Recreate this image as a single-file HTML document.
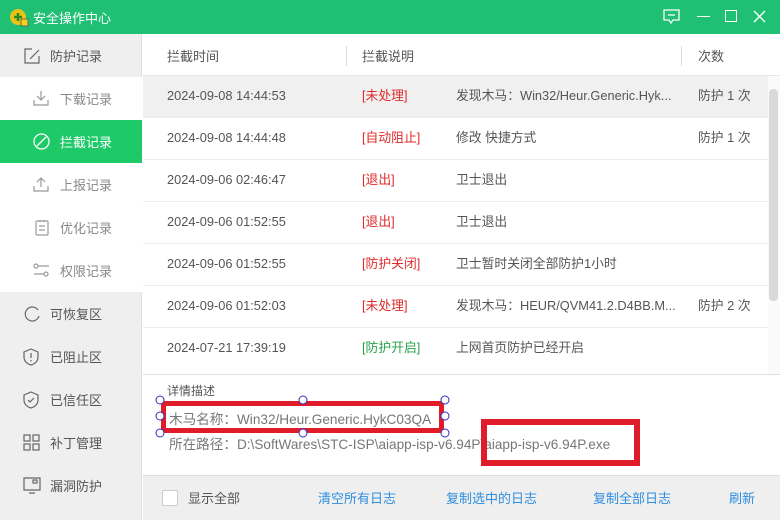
<!DOCTYPE html>
<html><head><meta charset="utf-8"><style>
*{margin:0;padding:0;box-sizing:border-box}
body{width:780px;height:520px;overflow:hidden;font-family:"Liberation Sans","Noto Sans CJK SC",sans-serif;font-size:13px;color:#555;background:#fff;position:relative}
.title{position:absolute;left:0;top:0;width:780px;height:34px;background:#1fbf74;color:#fff}
.title .t{position:absolute;left:33px;top:8px;font-size:13px}
.side{position:absolute;left:0;top:34px;width:142px;height:486px;background:#efefef;border-right:1px solid #e0e0e0}
.it{position:absolute;left:0;width:142px;height:43px;line-height:45px;font-size:13px;color:#555}
.it svg{position:absolute;top:13px}
.sub{background:#fff;color:#888}
.sub span{position:absolute;left:60px}
.main span.l{position:absolute;left:50px}
.act{background:#1ec968;color:#fff}
.row{position:absolute;left:143px;width:625px;height:42px;border-bottom:1px solid #ececec}
.row div{position:absolute;top:0;line-height:40px;white-space:nowrap;font-size:12.8px}
.c1{left:24px}.c2{left:219px}.c3{left:313px}.c4{left:555px}
.red{color:#e02a2a}.grn{color:#28a048}
.lnk{position:absolute;top:488px;color:#2e8ee0}
</style></head><body>
<div class="title">
<svg style="position:absolute;left:9px;top:7px" width="20" height="20"><circle cx="9" cy="10" r="8" fill="#e8c416"/><path d="M5 10h8M9 6v8" stroke="#2a8a2a" stroke-width="2.5"/><rect x="12" y="12" width="7" height="7" fill="#f5d020" stroke="#555" stroke-width=".8"/></svg>
<div class="t">安全操作中心</div>
<svg style="position:absolute;left:663px;top:9px" width="17" height="16" fill="none" stroke="#fff" stroke-width="1.3"><path d="M1 1h15v10H10l-2 3-2-3H1z"/><path d="M5 6h7"/></svg>
<div style="position:absolute;left:697px;top:16px;width:13px;height:1.3px;background:#fff"></div>
<div style="position:absolute;left:725px;top:10px;width:12px;height:12px;border:1.3px solid #fff"></div>
<svg style="position:absolute;left:753px;top:10px" width="13" height="13" stroke="#fff" stroke-width="1.4"><path d="M1 1l11 11M12 1L1 12"/></svg>
</div>
<div class="side">
<div class="it main" style="top:0"><svg style="left:23px" width="18" height="18" fill="none" stroke="#666" stroke-width="1.2"><path d="M9 2H2v14h14V9"/><path d="M7 12l9-9"/></svg><span class="l">防护记录</span></div>
<div class="it sub" style="top:43px"><svg style="left:33px" width="16" height="16" fill="none" stroke="#999" stroke-width="1.2"><path d="M8 1v9M4 6l4 4 4-4M1 10v5h14v-5"/></svg><span>下载记录</span></div>
<div class="it sub act" style="top:86px"><svg style="left:33px" width="17" height="17" fill="none" stroke="#fff" stroke-width="1.3"><circle cx="8.5" cy="8.5" r="7.5"/><path d="M4 13l9-9"/></svg><span>拦截记录</span></div>
<div class="it sub" style="top:129px"><svg style="left:33px" width="16" height="16" fill="none" stroke="#999" stroke-width="1.2"><path d="M8 11V2M4 6l4-4 4 4M1 10v5h14v-5"/></svg><span>上报记录</span></div>
<div class="it sub" style="top:172px"><svg style="left:35px" width="14" height="17" fill="none" stroke="#999" stroke-width="1.2"><rect x="1" y="2" width="12" height="14" rx="1"/><path d="M4 7h6M4 11h6M5 1v2M9 1v2"/></svg><span>优化记录</span></div>
<div class="it sub" style="top:215px"><svg style="left:33px" width="17" height="16" fill="none" stroke="#999" stroke-width="1.2"><circle cx="3" cy="4" r="2"/><path d="M5 4h11M1 12h10"/><circle cx="13" cy="12" r="2"/></svg><span>权限记录</span></div>
<div class="it main" style="top:258px"><svg style="left:23px" width="18" height="18" fill="none" stroke="#666" stroke-width="1.2"><path d="M15 5A7 7 0 1 0 16 11"/></svg><span class="l">可恢复区</span></div>
<div class="it main" style="top:301px"><svg style="left:23px" width="16" height="18" fill="none" stroke="#666" stroke-width="1.2"><path d="M8 1l7 3v5c0 4-3 7-7 8-4-1-7-4-7-8V4z"/><path d="M8 5v5M8 12v1.5"/></svg><span class="l">已阻止区</span></div>
<div class="it main" style="top:344px"><svg style="left:23px" width="16" height="18" fill="none" stroke="#666" stroke-width="1.2"><path d="M8 1l7 3v5c0 4-3 7-7 8-4-1-7-4-7-8V4z"/><path d="M5 9l2 2 4-4"/></svg><span class="l">已信任区</span></div>
<div class="it main" style="top:387px"><svg style="left:23px" width="17" height="17" fill="none" stroke="#666" stroke-width="1.2"><rect x="1" y="1" width="6" height="6"/><rect x="10" y="1" width="6" height="6"/><rect x="1" y="10" width="6" height="6"/><rect x="10" y="10" width="6" height="6"/></svg><span class="l">补丁管理</span></div>
<div class="it main" style="top:430px"><svg style="left:23px" width="18" height="18" fill="none" stroke="#666" stroke-width="1.2"><path d="M1 1h16v12H1zM6 16h6"/><rect x="10" y="3" width="4" height="3"/></svg><span class="l">漏洞防护</span></div>
</div>
<div style="position:absolute;left:143px;top:34px;width:637px;height:42px;border-bottom:1px solid #e6e6e6">
<div style="position:absolute;left:24px;top:12px">拦截时间</div>
<div style="position:absolute;left:203px;top:12px;width:1px;height:20px;background:#ddd"></div>
<div style="position:absolute;left:219px;top:12px">拦截说明</div>
<div style="position:absolute;left:538px;top:12px;width:1px;height:20px;background:#ddd"></div>
<div style="position:absolute;left:555px;top:12px">次数</div>
</div>
<div class="row" style="top:76px;background:#f0f0f0"><div class="c1">2024-09-08 14:44:53</div><div class="c2 red">[未处理]</div><div class="c3">发现木马：Win32/Heur.Generic.Hyk...</div><div class="c4">防护 1 次</div></div>
<div class="row" style="top:118px"><div class="c1">2024-09-08 14:44:48</div><div class="c2 red">[自动阻止]</div><div class="c3">修改 快捷方式</div><div class="c4">防护 1 次</div></div>
<div class="row" style="top:160px"><div class="c1">2024-09-06 02:46:47</div><div class="c2 red">[退出]</div><div class="c3">卫士退出</div></div>
<div class="row" style="top:202px"><div class="c1">2024-09-06 01:52:55</div><div class="c2 red">[退出]</div><div class="c3">卫士退出</div></div>
<div class="row" style="top:244px"><div class="c1">2024-09-06 01:52:55</div><div class="c2 red">[防护关闭]</div><div class="c3">卫士暂时关闭全部防护1小时</div></div>
<div class="row" style="top:286px"><div class="c1">2024-09-06 01:52:03</div><div class="c2 red">[未处理]</div><div class="c3">发现木马：HEUR/QVM41.2.D4BB.M...</div><div class="c4">防护 2 次</div></div>
<div class="row" style="top:328px;border:none"><div class="c1">2024-07-21 17:39:19</div><div class="c2 grn">[防护开启]</div><div class="c3">上网首页防护已经开启</div></div>
<div style="position:absolute;left:768px;top:76px;width:12px;height:298px;background:#fafafa"></div>
<div style="position:absolute;left:769px;top:89px;width:9px;height:212px;background:#d9d9d9;border-radius:4px"></div>
<div style="position:absolute;left:143px;top:374px;width:637px;height:101px;border-top:1px solid #ddd;background:#fff">
<div style="position:absolute;left:24px;top:7px;font-size:12px">详情描述</div>
<div style="position:absolute;left:26px;top:33px;color:#777;font-size:13.6px">木马名称：Win32/Heur.Generic.HykC03QA</div>
<div style="position:absolute;left:26px;top:58px;color:#777;font-size:13.6px">所在路径：D:\SoftWares\STC-ISP\aiapp-isp-v6.94P\aiapp-isp-v6.94P.exe</div>
</div>
<div style="position:absolute;left:161px;top:401px;width:283px;height:32px;border:5px solid #e01c2a"></div>
<svg style="position:absolute;left:155px;top:395px" width="296" height="44" fill="#fff" stroke="#3030c0" stroke-width="1"><circle cx="5" cy="5" r="4"/><circle cx="148" cy="5" r="4"/><circle cx="290" cy="5" r="4"/><circle cx="5" cy="21" r="4"/><circle cx="290" cy="21" r="4"/><circle cx="5" cy="38" r="4"/><circle cx="148" cy="38" r="4"/><circle cx="290" cy="38" r="4"/></svg>
<div style="position:absolute;left:481px;top:419px;width:159px;height:47px;border:6px solid #e01c2a"></div>
<div style="position:absolute;left:143px;top:475px;width:637px;height:45px;background:#efefef;border-top:1px solid #ddd"></div>
<div style="position:absolute;left:162px;top:490px;width:16px;height:16px;background:#fff;border:1px solid #ccc;border-radius:2px"></div>
<div style="position:absolute;left:188px;top:488px;color:#555">显示全部</div>
<div class="lnk" style="left:318px">清空所有日志</div>
<div class="lnk" style="left:446px">复制选中的日志</div>
<div class="lnk" style="left:593px">复制全部日志</div>
<div class="lnk" style="left:729px">刷新</div>
</body></html>
